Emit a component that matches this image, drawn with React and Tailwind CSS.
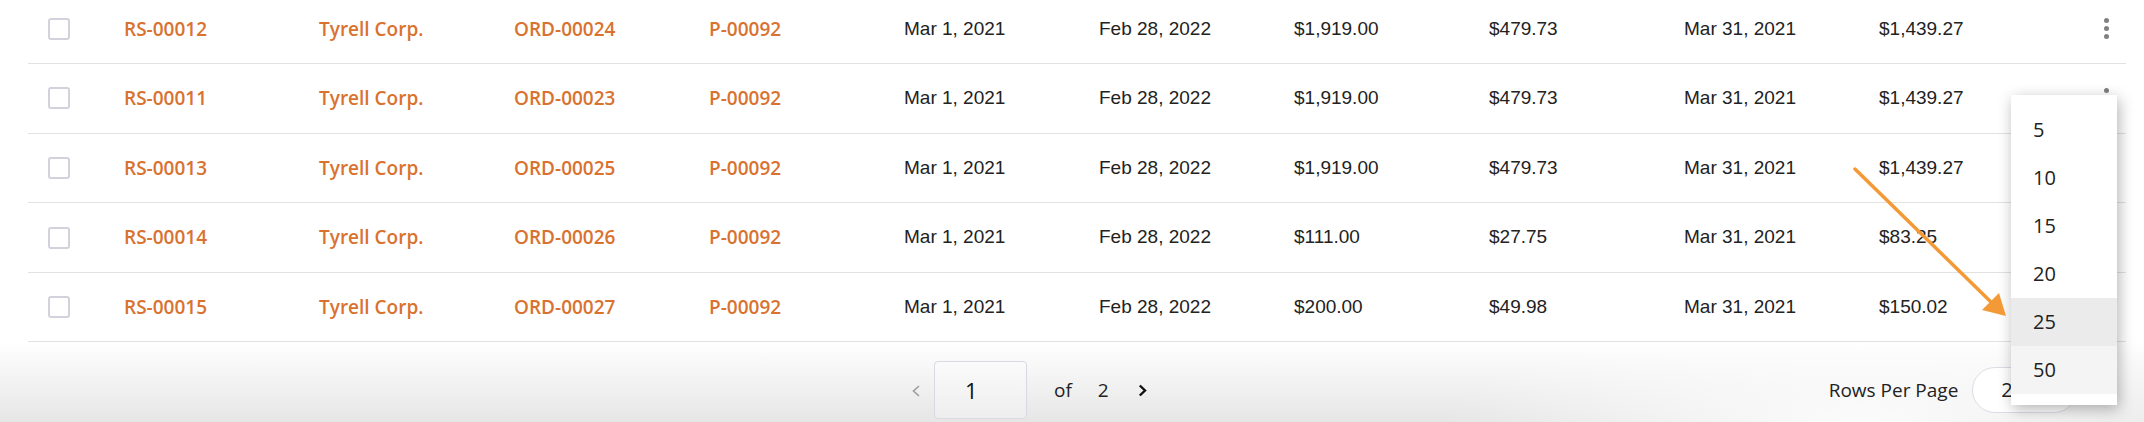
import React from 'react'

const ROWS = [
  { id: 'RS-00012', order: 'ORD-00024', total: '$1,919.00', tax: '$479.73', net: '$1,439.27' },
  { id: 'RS-00011', order: 'ORD-00023', total: '$1,919.00', tax: '$479.73', net: '$1,439.27' },
  { id: 'RS-00013', order: 'ORD-00025', total: '$1,919.00', tax: '$479.73', net: '$1,439.27' },
  { id: 'RS-00014', order: 'ORD-00026', total: '$111.00', tax: '$27.75', net: '$83.25' },
  { id: 'RS-00015', order: 'ORD-00027', total: '$200.00', tax: '$49.98', net: '$150.02' },
]

const PAGE_SIZES = ['5', '10', '15', '20', '25', '50']

const linkCls = "font-['Open_Sans',sans-serif] font-semibold text-[19px] text-[#d9722f]"
const cellCls = "font-['Liberation_Sans',Arial,sans-serif] text-[19px] text-[#222]"

function Kebab() {
  return (
    <div className="flex flex-col gap-[3px]">
      <span className="block w-[5px] h-[5px] rounded-full bg-[#808080]" />
      <span className="block w-[5px] h-[5px] rounded-full bg-[#808080]" />
      <span className="block w-[5px] h-[5px] rounded-full bg-[#808080]" />
    </div>
  )
}

function Row({ row }) {
  return (
    <div className="grid grid-cols-[96px_repeat(10,195px)_1fr] items-center h-[69.6px] border-b border-[#e2e2e2]">
      <div className="pl-[20px]">
        <div className="w-[22px] h-[22px] border-2 border-[#d2d2dc] rounded-[3px] bg-white" />
      </div>
      <div className={linkCls}>{row.id}</div>
      <div className={linkCls}>Tyrell Corp.</div>
      <div className={linkCls}>{row.order}</div>
      <div className={linkCls}>P-00092</div>
      <div className={cellCls}>Mar 1, 2021</div>
      <div className={cellCls}>Feb 28, 2022</div>
      <div className={cellCls}>{row.total}</div>
      <div className={cellCls}>{row.tax}</div>
      <div className={cellCls}>Mar 31, 2021</div>
      <div className={cellCls}>{row.net}</div>
      <div className="flex justify-end pr-[17px]">
        <Kebab />
      </div>
    </div>
  )
}

export default function App() {
  return (
    <div className="relative w-[2144px] h-[422px] overflow-hidden bg-white">
      {/* Table rows */}
      <div className="mx-[28px] mr-[18px] -mt-[5.5px]">
        {ROWS.map((row) => (
          <Row key={row.id} row={row} />
        ))}
      </div>

      {/* Footer / pagination */}
      <div className="h-[85px] bg-[radial-gradient(ellipse_420px_110px_at_1860px_100%,rgba(255,255,255,0.9),rgba(255,255,255,0)),linear-gradient(to_bottom,#ffffff,#e4e4e4)]">
        <div className="flex items-start pt-[19px] font-['Open_Sans',sans-serif]">
          <div className="flex items-center ml-[912px] h-[58px]">
            <svg width="8" height="12" viewBox="0 0 8 12" className="mt-[1px]">
              <path d="M7 1 L1.5 6 L7 11" fill="none" stroke="#9a9a9a" strokeWidth="1.5" />
            </svg>
            <div className="ml-[14px] w-[93px] h-[58px] border border-[#d9d9e1] rounded-[4px] bg-white/30 flex items-center pl-[30px] text-[22px] text-[#111]">
              1
            </div>
            <span className="ml-[27px] text-[19px] text-[#222]">of</span>
            <span className="ml-[26px] text-[19px] text-[#222]">2</span>
            <svg width="9" height="13" viewBox="0 0 9 13" className="ml-[29px]">
              <path d="M1.8 1.5 L7 6.5 L1.8 11.5" fill="none" stroke="#111" strokeWidth="2.4" />
            </svg>
          </div>

          <div className="flex items-center ml-[682px] mt-[6px] h-[46px]">
            <span className="text-[19px] text-[#222]">Rows Per Page</span>
            <div className="ml-[14px] w-[105px] h-[46px] rounded-full border border-[#dcdce6] bg-white flex items-center pl-[28px] text-[20px] text-[#222]">
              25
            </div>
          </div>
        </div>
      </div>

      {/* Rows-per-page dropdown */}
      <div className="absolute left-[2011px] top-[95px] w-[106px] h-[310px] bg-white shadow-[2px_4px_14px_rgba(0,0,0,0.3)] pt-[11px] font-['Open_Sans',sans-serif]">
        {PAGE_SIZES.map((size) => (
          <div
            key={size}
            className={
              size === '25'
                ? 'h-[48px] flex items-center pl-[22px] text-[20px] text-[#222] bg-[#ebebeb]'
                : size === '50'
                ? 'h-[48px] flex items-center pl-[22px] text-[20px] text-[#222] bg-[#f4f4f4]'
                : 'h-[48px] flex items-center pl-[22px] text-[20px] text-[#222]'
            }
          >
            {size}
          </div>
        ))}
      </div>

      {/* Annotation arrow */}
      <svg className="absolute left-[1850px] top-[164px]" width="160" height="156" viewBox="0 0 160 156">
        <line x1="5" y1="5" x2="142" y2="139" stroke="#f39a36" strokeWidth="3.5" strokeLinecap="round" />
        <polygon points="156,152 132,146 149,129" fill="#f39a36" />
      </svg>
    </div>
  )
}
